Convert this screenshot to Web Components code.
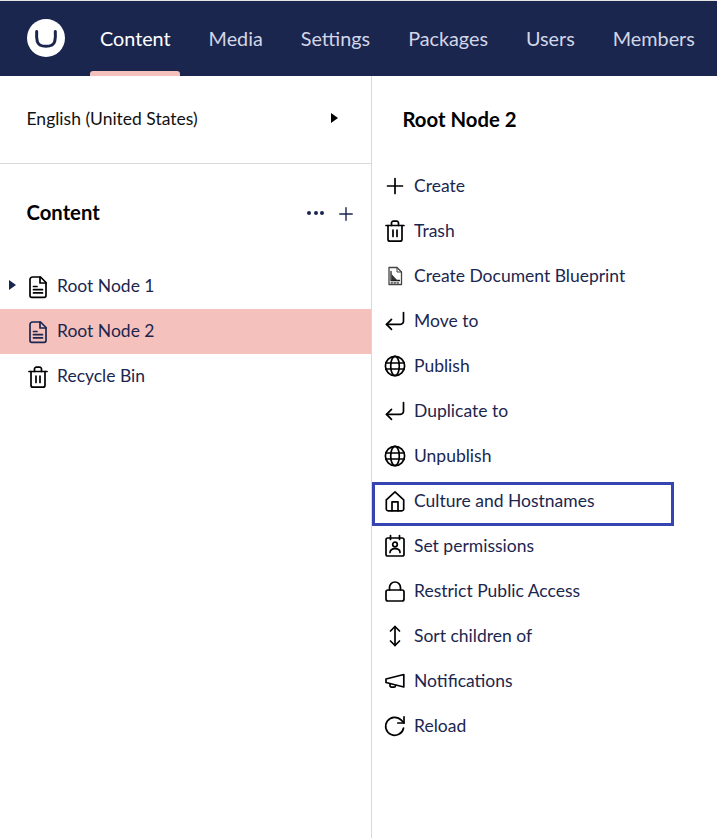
<!DOCTYPE html>
<html>
<head>
<meta charset="utf-8">
<style>
    html, body { margin: 0; height: 100%; background: #fff; }
    body { font-family: Lato, "Open Sans", sans-serif; color: #000; overflow: hidden; }
</style>
</head>
<body>
<umb-app>
    <umb-header slot="header">
        <umb-nav-item active>Content</umb-nav-item>
        <umb-nav-item>Media</umb-nav-item>
        <umb-nav-item>Settings</umb-nav-item>
        <umb-nav-item>Packages</umb-nav-item>
        <umb-nav-item>Users</umb-nav-item>
        <umb-nav-item>Members</umb-nav-item>
    </umb-header>
    <umb-tree slot="tree">
        <umb-tree-item icon="doc" caret>Root Node 1</umb-tree-item>
        <umb-tree-item icon="doc" active>Root Node 2</umb-tree-item>
        <umb-tree-item icon="trash">Recycle Bin</umb-tree-item>
    </umb-tree>
    <umb-actions slot="actions" heading="Root Node 2">
        <umb-action icon="plus">Create</umb-action>
        <umb-action icon="trash">Trash</umb-action>
        <umb-action icon="blueprint">Create Document Blueprint</umb-action>
        <umb-action icon="move">Move to</umb-action>
        <umb-action icon="globe">Publish</umb-action>
        <umb-action icon="move">Duplicate to</umb-action>
        <umb-action icon="globe">Unpublish</umb-action>
        <umb-action icon="home" focused>Culture and Hostnames</umb-action>
        <umb-action icon="perm">Set permissions</umb-action>
        <umb-action icon="lock">Restrict Public Access</umb-action>
        <umb-action icon="sort">Sort children of</umb-action>
        <umb-action icon="horn">Notifications</umb-action>
        <umb-action icon="reload">Reload</umb-action>
    </umb-actions>
</umb-app>

<script>
// all icons live on a 24x24 box, stroke only unless noted
const ICONS = {
    doc: `<path d="M6.500 2h8l5.500 5.500V20.500a1.800 1.800 0 0 1-1.800 1.800H5.800A1.800 1.800 0 0 1 4 20.500V4.500a2.500 2.500 0 0 1 2.500-2.500z"/><path d="M14 2v6h6"/><path d="M7.500 11.500h3.500M7.500 14.700h9M7.500 17.900h9"/>`,
    trash: `<path d="M3 6.500h18"/><path d="M8.500 6.500V4a1.800 1.800 0 0 1 1.800-1.800h3.400A1.800 1.800 0 0 1 15.500 4v2.500"/><path d="M5 6.500v13.700a2 2 0 0 0 2 2h10a2 2 0 0 0 2-2V6.500"/><path d="M10 11v6.500M14 11v6.500"/>`,
    plus: `<path d="M12 4.500v15M4.500 12h15"/>`,
    blueprint: `<path d="M6 3.500h8L18.500 8v12.500H6z" stroke-width="1.300" stroke="#444"/><path d="M14 3.500V8h4.500" stroke-width="1" stroke="#444"/><path d="M8 7.500v9h8.500" stroke-width="1.300" stroke="#222"/><path d="M8.500 10l5.500 6H8.500z" fill="#333" stroke="none"/><path d="M8 18.800h9" stroke-width="1.200" stroke-dasharray="1.500 1.500" stroke="#333"/>`,
    move: `<path d="M20.500 3.500v8.800a3 3 0 0 1-3 3H3.500"/><path d="M8.500 10.300l-5 5 5 5"/>`,
    globe: `<circle cx="12" cy="12" r="9.600"/><ellipse cx="12" cy="12" rx="4.300" ry="9.600"/><path d="M2.800 9h18.400M2.800 15h18.400"/>`,
    home: `<path d="M3.300 10.800L12 2.800l8.700 8V20a1.800 1.800 0 0 1-1.800 1.800H5.100A1.800 1.800 0 0 1 3.300 20z"/><path d="M9 21.800v-9h6v9"/>`,
    perm: `<rect x="3" y="4" width="18" height="18" rx="1.800"/><path d="M7.500 1.500v4M16.500 1.500v4"/><circle cx="12" cy="10.500" r="2.300"/><path d="M7 18.500c0-2.400 2-3.800 5-3.800s5 1.400 5 3.800"/>`,
    lock: `<rect x="3" y="11" width="18" height="11" rx="2"/><path d="M6.500 11V8.500a5.500 5.500 0 0 1 11 0V11"/>`,
    sort: `<path d="M12 2.500v19"/><path d="M7.500 7L12 2.500 16.500 7M7.500 17l4.500 4.500 4.500-4.500"/>`,
    horn: `<path d="M20.800 5.500v12.500L3 13.500v-3.500z"/><path d="M7 14.800v1.800a1.500 1.500 0 0 0 1.500 1.500h2.500a1.500 1.500 0 0 0 1.500-1.400"/>`,
    reload: `<path d="M20.500 14.200a9 9 0 1 1-2.200-8L21 9"/><path d="M21 2.800V9h-6.200"/>`
}

function icon(name, size) {
    return `<svg width="${size}" height="${size}" viewBox="0 0 24 24" fill="none" stroke="currentColor" stroke-width="1.700" stroke-linecap="round" stroke-linejoin="round">${ICONS[name]}</svg>`
}

class UmbApp extends HTMLElement {
    constructor() {
        super()
        this.attachShadow({ mode: 'open' }).innerHTML = `<style>
            :host { display: flex; flex-direction: column; height: 838px; }
            .body { display: flex; flex: 1; min-height: 0; }
        </style>
        <slot name="header"></slot>
        <div class="body">
            <slot name="tree"></slot>
            <slot name="actions"></slot>
        </div>`
    }
}

class UmbHeader extends HTMLElement {
    constructor() {
        super()
        this.attachShadow({ mode: 'open' }).innerHTML = `<style>
            :host { display: flex; align-items: stretch; height: 75px; border-top: 1px solid #e4e4e4; background: #1b264f; padding-left: 27px; flex: none; }
            .logo { width: 38px; height: 38px; margin: 18px 25px 0 0; flex: none; }
            nav { display: flex; }
        </style>
        <svg class="logo" viewBox="0 0 38 38">
            <circle cx="19" cy="19" r="19" fill="#fff"/>
            <path d="M9.700 12.500c-.3 4-.2 7 .6 10 .8 3.300 3.500 4.800 8.700 4.800s7.900-1.500 8.700-4.800c.8-3 .9-6 .6-10" fill="none" stroke="#1b264f" stroke-width="3" stroke-linecap="round"/>
        </svg>
        <nav><slot></slot></nav>`
    }
}

class UmbNavItem extends HTMLElement {
    constructor() {
        super()
        this.attachShadow({ mode: 'open' }).innerHTML = `<style>
            :host { display: block; position: relative; padding: 0 19px; color: #d2d6e6; font-size: 19.800px; line-height: 75px; white-space: nowrap; }
            :host([active]) { color: #fff; padding: 0 19px 0 10px; }
            :host([active]) i { display: block; }
            i { display: none; position: absolute; left: 0; width: 90px; bottom: 0; height: 5px; background: #f5c1bc; border-radius: 3px 3px 0 0; }
        </style><span><slot></slot></span><i></i>`
    }
}

class UmbTree extends HTMLElement {
    constructor() {
        super()
        this.attachShadow({ mode: 'open' }).innerHTML = `<style>
            :host { display: block; width: 371px; border-right: 1px solid #d8d7d9; flex: none; color: #000; }
            .lang { display: flex; align-items: center; justify-content: space-between; height: 88px; box-sizing: border-box; padding: 0 33px 3px 26.500px; border-bottom: 1px solid #d8d7d9; font-size: 17.500px; color: #111; }
            .lang b { width: 0; height: 0; border-left: 7px solid #000; border-top: 5px solid transparent; border-bottom: 5px solid transparent; }
            .head { display: flex; align-items: center; height: 50px; margin-top: 24px; padding: 0 15.500px 0 26.500px; }
            h3 { margin: 0; flex: 1; font-size: 20.300px; font-weight: 700; padding-bottom: 2px; }
            .dots { display: flex; gap: 2.500px; margin: -1px 11.500px 0 0; }
            .dots i { width: 4px; height: 4px; border-radius: 50%; background: #1b264f; }
            .plus { color: #1b264f; display: block; margin-top: 2px; }
            .plus svg { display: block; }
            .list { margin-top: 26px; }
        </style>
        <div class="lang"><span>English (United States)</span><b></b></div>
        <div class="head"><h3>Content</h3><div class="dots"><i></i><i></i><i></i></div><span class="plus">${icon('plus', 20)}</span></div>
        <div class="list"><slot></slot></div>`
    }
}

class UmbTreeItem extends HTMLElement {
    constructor() {
        super()
        const name = this.getAttribute('icon')
        this.attachShadow({ mode: 'open' }).innerHTML = `<style>
            :host { display: flex; align-items: center; position: relative; height: 45px; padding-left: 26px; gap: 7px; font-size: 17.500px; color: #1b264f; }
            :host([active]) { background: #f5c1bc; }
            span { padding-bottom: 2px; }
            svg { flex: none; color: #000; }
            :host([active]) svg { color: #1b264f; }
            b { display: none; position: absolute; left: 9px; top: 16px; border-left: 7px solid #1b264f; border-top: 5px solid transparent; border-bottom: 5px solid transparent; }
            :host([caret]) b { display: block; }
        </style><b></b>${icon(name, 24)}<span><slot></slot></span>`
    }
}

class UmbActions extends HTMLElement {
    constructor() {
        super()
        this.attachShadow({ mode: 'open' }).innerHTML = `<style>
            :host { display: block; flex: 1; }
            h3 { margin: 0; height: 87px; line-height: 87px; padding-left: 30.500px; font-size: 20.300px; font-weight: 700; color: #000; }
        </style>
        <h3>${this.getAttribute('heading')}</h3>
        <div class="list"><slot></slot></div>`
    }
}

class UmbAction extends HTMLElement {
    constructor() {
        super()
        const name = this.getAttribute('icon')
        this.attachShadow({ mode: 'open' }).innerHTML = `<style>
            :host { display: flex; align-items: center; position: relative; height: 45px; padding-left: 10.500px; gap: 7.500px; font-size: 17.500px; color: #1b264f; }
            svg { flex: none; color: #000; }
            i { display: none; position: absolute; left: 0; top: 4px; width: 302px; height: 44px; box-sizing: border-box; border: 3px solid #3544b1; }
            :host([focused]) i { display: block; }
        </style><i></i>${icon(name, 24)}<span><slot></slot></span>`
    }
}

customElements.define('umb-app', UmbApp)
customElements.define('umb-header', UmbHeader)
customElements.define('umb-nav-item', UmbNavItem)
customElements.define('umb-tree', UmbTree)
customElements.define('umb-tree-item', UmbTreeItem)
customElements.define('umb-actions', UmbActions)
customElements.define('umb-action', UmbAction)
</script>
</body>
</html>
